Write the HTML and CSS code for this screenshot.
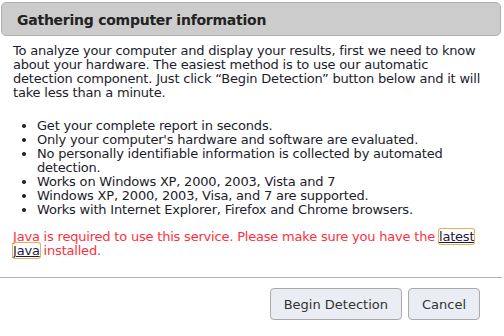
FILE: index.html
```html
<!DOCTYPE html>
<html>
<head>
<meta charset="utf-8">
<link rel="stylesheet" href="styles.css">
</head>
<body>
<div class="dialog">
  <div class="header"><h1 class="title">Gathering computer information</h1></div>
  <div class="content">
    <p class="intro">To analyze your computer and display your results, first we need to know<br>about your hardware. The easiest method is to use our automatic<br>detection component. Just click “Begin Detection” button below and it will<br>take less than a minute.</p>
    <ul class="features">
      <li>Get your complete report in seconds.</li>
      <li>Only your computer's hardware and software are evaluated.</li>
      <li>No personally identifiable information is collected by automated<br>detection.</li>
      <li>Works on Windows XP, 2000, 2003, Vista and 7</li>
      <li>Windows XP, 2000, 2003, Visa, and 7 are supported.</li>
      <li>Works with Internet Explorer, Firefox and Chrome browsers.</li>
    </ul>
    <p class="warning"><span class="java">Java</span> is required to use this service. Please make sure you have the <a class="link" href="#">latest<br>Java</a> installed.</p>
  </div>
  <div class="footer">
    <button class="btn">Begin Detection</button>
    <button class="btn">Cancel</button>
  </div>
</div>
</body>
</html>
```
FILE: styles.css
```css
html, body {
  margin: 0;
  padding: 0;
  background: #ffffff;
}
body {
  font-family: "DejaVu Sans", Verdana, sans-serif;
  font-size: 13px;
  color: #1c1c2c;
}
.dialog {
  width: 504px;
  height: 336px;
  border-bottom: 1px solid #b4b4b4;
  box-sizing: border-box;
}
.header {
  margin: 2px 3px 0 1px;
  height: 32px;
  background: #cccccc;
  border: 1px solid #b0b0b0;
  border-radius: 5px;
  display: flex;
  align-items: center;
  padding-left: 15px;
}
.title {
  margin: 1px 0 0 0;
  font-size: 14px;
  font-weight: bold;
  color: #222222;
  letter-spacing: -0.25px;
}
.content {
  height: 241px;
  box-sizing: border-box;
  padding: 8px 2px 0 13px;
  line-height: 14px;
  letter-spacing: -0.2px;
  white-space: nowrap;
}
.intro {
  margin: 0;
}
.features {
  margin: 19px 0 0 0;
  padding-left: 24px;
}
.warning {
  margin: 13px 0 0 0;
  color: #ff3040;
}
.link {
  color: #1c1c40;
  text-decoration: underline;
  outline: 1px solid #e8b050;
  border-radius: 2px;
}
.footer {
  border-top: 1px solid #b4b4b4;
  margin-right: 2px;
  height: 57px;
  box-sizing: border-box;
  display: flex;
  justify-content: flex-end;
  align-items: flex-start;
  gap: 6px;
  padding: 10px 22px 0 0;
}
.btn {
  font-family: "DejaVu Sans", Verdana, sans-serif;
  font-size: 13px;
  color: #333333;
  background: #eaedf4;
  border: 1px solid #aaaaaa;
  border-radius: 4px;
  height: 32px;
  padding: 0 13px;
}
```
